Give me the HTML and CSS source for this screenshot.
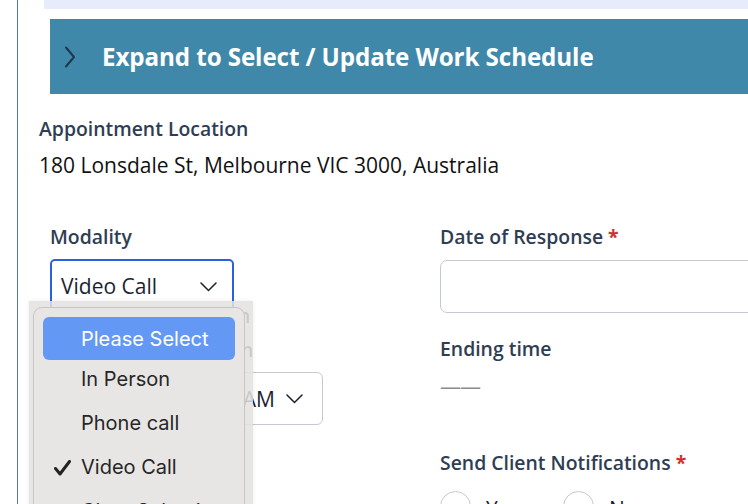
FILE: index.html
```html
<!DOCTYPE html>
<html lang="en">
<head>
<meta charset="utf-8">
<title>Appointment</title>
<link rel="stylesheet" href="styles.css">
</head>
<body>
<div class="frame">
  <div class="prev-card"></div>
  <div class="expander">
    <svg class="chev" width="12" height="22" viewBox="0 0 12 22"><path d="M2 1.5 L10 11 L2 20.5" fill="none" stroke="#22354f" stroke-width="2" stroke-linecap="round" stroke-linejoin="round"/></svg>
    <span class="expander-title">Expand to Select / Update Work Schedule</span>
  </div>

  <div class="location">
    <div class="label">Appointment Location</div>
    <div class="value">180 Lonsdale St, Melbourne VIC 3000, Australia</div>
  </div>

  <div class="grid">
    <div class="col left">
      <div class="label">Modality</div>
      <div class="select focused">
        <span>Video Call</span>
        <svg class="caret" width="17" height="10" viewBox="0 0 17 10"><path d="M1 1 L8.5 8.5 L16 1" fill="none" stroke="#1b2030" stroke-width="1.5" stroke-linecap="round" stroke-linejoin="round"/></svg>
      </div>
      <div class="label ghost">Appointment Location</div>
      <div class="label second">Appointment Duration</div>
      <div class="select time">
        <span>09:00 AM</span>
        <svg class="caret" width="17" height="10" viewBox="0 0 17 10"><path d="M1 1 L8.5 8.5 L16 1" fill="none" stroke="#1b2030" stroke-width="1.5" stroke-linecap="round" stroke-linejoin="round"/></svg>
      </div>

      <div class="popup">
        <div class="menu">
          <div class="item active">Please Select</div>
          <div class="item">In Person</div>
          <div class="item">Phone call</div>
          <div class="item checked"><svg class="check" width="17" height="16" viewBox="0 0 17 16"><path d="M1.5 8.5 L6 14 L15.5 1.5" fill="none" stroke="#232323" stroke-width="3" stroke-linecap="round" stroke-linejoin="round"/></svg>Video Call</div>
          <div class="item">Clear Selection</div>
        </div>
      </div>
    </div>

    <div class="col right">
      <div class="label">Date of Response <span class="req">*</span></div>
      <div class="input"></div>
      <div class="label ending">Ending time</div>
      <div class="dash">——</div>
      <div class="label notify">Send Client Notifications <span class="req">*</span></div>
      <div class="radios">
        <label class="radio"><span class="circle"></span>Yes</label>
        <label class="radio"><span class="circle"></span>No</label>
      </div>
    </div>
  </div>
</div>
</body>
</html>
```

FILE: styles.css
```css
html, body {
  margin: 0;
  padding: 0;
  background: #ffffff;
  overflow: hidden;
}
body {
  font-family: "Open Sans", "Noto Sans", sans-serif;
  width: 748px;
  height: 504px;
}
.frame {
  margin-left: 17px;
  border-left: 1px solid #5572cf;
  height: 504px;
  overflow: hidden;
  position: relative;
}
.prev-card {
  margin-left: 26px;
  height: 9px;
  background: #e6ecfb;
}
.expander {
  margin: 10px 0 0 32px;
  height: 75px;
  width: 760px;
  background: #3f88a9;
  display: flex;
  align-items: center;
  padding-left: 14px;
  box-sizing: border-box;
}
.chev {
  flex: none;
  margin-top: 1px;
}
.expander-title {
  margin-left: 26px;
  color: #ffffff;
  font-weight: 700;
  font-size: 24.2px;
  letter-spacing: -0.1px;
  white-space: nowrap;
}
.location {
  padding-left: 21px;
  margin-top: 23px;
}
.label {
  color: #2f3d54;
  font-weight: 600;
  font-size: 19.4px;
  line-height: 24px;
  white-space: nowrap;
}
.value {
  margin-top: 11px;
  color: #111111;
  font-size: 21px;
  line-height: 26px;
  white-space: nowrap;
}
.grid {
  display: grid;
  grid-template-columns: 390px 340px;
  padding-left: 32px;
  margin-top: 47px;
}
.col {
  display: flex;
  flex-direction: column;
  align-items: flex-start;
}
.left {
  position: relative;
}
.select {
  box-sizing: border-box;
  display: flex;
  align-items: center;
  background: #ffffff;
}
.select span {
  font-size: 21px;
  color: #1a1f33;
  white-space: nowrap;
}
.select.focused {
  margin-top: 10px;
  width: 184px;
  height: 53px;
  border: 2px solid #2b62dc;
  border-radius: 5px;
  padding: 0 15px 0 9px;
  justify-content: space-between;
}
.select.focused .caret {
  margin-top: 2px;
}
.ghost {
  line-height: 22px;
  margin-top: -7px;
  margin-left: -9px;
}
.second {
  margin-top: 11px;
  margin-left: -9px;
}
.select.time {
  margin-top: 10px;
  width: 273px;
  height: 53px;
  border: 1px solid #c4c9d2;
  border-radius: 6px;
  justify-content: flex-end;
  gap: 11px;
  padding-right: 19px;
}
.popup {
  position: absolute;
  left: -21px;
  top: 76px;
  width: 224px;
  height: 230px;
  background: rgba(228, 226, 224, 0.86);
  box-shadow: 0 0 4px rgba(0, 0, 0, 0.08);
}
.menu {
  margin: 6px 0 0 4px;
  width: 212px;
  height: 220px;
  box-sizing: border-box;
  border: 1px solid #c8c6c4;
  border-radius: 9px;
  background: #e8e6e4;
  padding: 9px 9px 0 9px;
  font-family: "Inter", "Liberation Sans", sans-serif;
}
.item {
  height: 44px;
  border-radius: 6px;
  display: flex;
  align-items: center;
  padding-left: 38px;
  font-size: 20px;
  color: #262626;
  position: relative;
  white-space: nowrap;
}
.item.active {
  background: #6399f4;
  color: #ffffff;
  height: 43px;
  margin-bottom: -3px;
}
.check {
  position: absolute;
  left: 11px;
  top: 15px;
}
.req {
  color: #d1302e;
  font-weight: 700;
}
.input {
  margin-top: 11px;
  width: 340px;
  height: 53px;
  box-sizing: border-box;
  border: 1px solid #c4c9d2;
  border-radius: 7px;
}
.ending {
  margin-top: 24px;
}
.dash {
  margin-top: 13px;
  color: #8c8c8c;
  font-size: 21px;
  line-height: 24px;
  letter-spacing: -1px;
}
.notify {
  margin-top: 53px;
}
.radios {
  margin-top: 16px;
  display: flex;
  gap: 16px;
}
.radio {
  display: flex;
  align-items: flex-start;
  gap: 15px;
  font-size: 21px;
  color: #1a1f33;
  width: 107px;
  line-height: 36px;
}
.circle {
  width: 31px;
  height: 31px;
  box-sizing: border-box;
  border: 1px solid #c4c9d2;
  border-radius: 50%;
  flex: none;
}
```
